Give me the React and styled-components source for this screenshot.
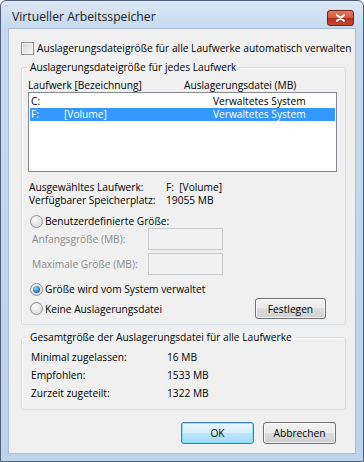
import React from "react";
import styled, { createGlobalStyle } from "styled-components";

const GlobalStyle = createGlobalStyle`
  html, body {
    margin: 0;
    padding: 0;
    background: #ffffff;
  }
  body {
    font-family: "Open Sans", "Noto Sans", sans-serif;
    font-size: 10.2px;
    color: #000;
  }
`;

const Window = styled.div`
  box-sizing: border-box;
  width: 364px;
  height: 462px;
  border: 1px solid #4f6078;
  border-radius: 6px 6px 0 0;
  background: linear-gradient(to bottom, #dce8f5 0, #c6d9ee 27px, #bdd3ec 100%);
  display: flex;
  flex-direction: column;
`;

const TitleBar = styled.div`
  height: 27px;
  display: flex;
  align-items: flex-start;
  justify-content: space-between;
  padding: 0 9px 0 11px;
`;

const Title = styled.div`
  font-size: 12.2px;
  line-height: 12px;
  margin-top: 10px;
  color: #1a1a1a;
`;

const CloseButton = styled.span`
  box-sizing: border-box;
  flex: none;
  width: 27px;
  height: 16px;
  margin-top: 9px;
  border: 1px solid #6e2218;
  border-radius: 3px;
  background-color: #c23f27;
  background-image: linear-gradient(180deg, #dc7a63 0%, #cf5a40 48%, #b2301c 52%, #c44c31 100%);
  display: flex;
  align-items: center;
  justify-content: center;
`;

const Client = styled.div`
  flex: 1;
  margin: 0 7px 7px;
  border: 1px solid #a8bbd2;
  background: #f0f0f0;
  padding: 12px 9px 0 12px;
  display: flex;
  flex-direction: column;
`;

const CheckRow = styled.label`
  display: flex;
  align-items: center;
  gap: 3px;
  height: 14px;
  white-space: nowrap;
`;

const CheckBox = styled.span`
  box-sizing: border-box;
  width: 13px;
  height: 13px;
  border: 1px solid #8e8f8f;
  box-shadow: inset 0 0 0 1px #f4f4f4;
  background: linear-gradient(135deg, #d6d6d6 0, #f7f7f7 100%);
  flex: none;
`;

const Group = styled.fieldset`
  margin: ${(p) => p.$top}px 0 0;
  padding: 0 8px ${(p) => p.$bottom}px 6px;
  border: 1px solid #d5dfe5;
  border-radius: 3px;
  box-shadow: inset 1px 1px 0 #ffffff;
  min-width: 0;
`;

const Legend = styled.legend`
  margin-left: -1px;
  padding: 0 3px;
  line-height: 14px;
  white-space: nowrap;
`;

const Columns = styled.div`
  display: grid;
  grid-template-columns: 156px 1fr;
  height: 14px;
  line-height: 14px;
  margin-top: 4px;
  white-space: nowrap;
`;

const ListBox = styled.div`
  box-sizing: border-box;
  height: 80px;
  border: 1px solid #828790;
  background: #ffffff;
  padding: 2px 1px;
`;

const ListRow = styled.div`
  display: grid;
  grid-template-columns: 33px 149px 1fr;
  padding-left: 1px;
  height: 13px;
  line-height: 13px;
  white-space: nowrap;
  background: ${(p) => (p.$selected ? "#3399ff" : "transparent")};
  color: ${(p) => (p.$selected ? "#ffffff" : "#000000")};
`;

const InfoGrid = styled.div`
  display: grid;
  grid-template-columns: ${(p) => p.$col}px 1fr;
  grid-auto-rows: ${(p) => p.$row}px;
  align-items: center;
  margin-top: ${(p) => p.$top}px;
  padding-left: ${(p) => p.$indent}px;
  white-space: nowrap;
`;

const RadioRow = styled.label`
  display: flex;
  align-items: center;
  gap: 2px;
  height: ${(p) => p.$height || 14}px;
  margin-top: ${(p) => p.$top}px;
  padding-left: 2px;
  white-space: nowrap;
`;

const RadioCircle = styled.span`
  box-sizing: border-box;
  width: 13px;
  height: 13px;
  border-radius: 50%;
  border: 1px solid #8e8f8f;
  background: radial-gradient(circle at 40% 35%, #fbfbfb 0, #e6e6e6 50%, #cfcfcf 100%);
  display: flex;
  align-items: center;
  justify-content: center;
  flex: none;
  &::after {
    content: "";
    display: ${(p) => (p.$checked ? "block" : "none")};
    width: 7px;
    height: 7px;
    border-radius: 50%;
    background: radial-gradient(circle at 40% 35%, #9fd8fb 0, #2d7fc4 55%, #174f8c 100%);
  }
`;

const FieldRow = styled.div`
  display: flex;
  align-items: center;
  height: ${(p) => p.$height}px;
  margin-top: ${(p) => p.$top}px;
  padding-left: 4px;
  color: #8a8a8a;
  white-space: nowrap;
`;

const FieldLabel = styled.span`
  width: 116px;
`;

const DisabledInput = styled.div`
  box-sizing: border-box;
  width: 75px;
  height: ${(p) => p.$height}px;
  border: 1px solid #c7c9cc;
  background: #f1f1f1;
`;

const Spacer = styled.span`
  flex: 1;
`;

const Button = styled.button`
  box-sizing: border-box;
  width: ${(p) => p.$width}px;
  height: ${(p) => p.$height}px;
  margin: 0 ${(p) => p.$right || 0}px 0 0;
  padding: 0;
  display: flex;
  align-items: center;
  justify-content: center;
  font-family: inherit;
  font-size: 10.2px;
  color: #000;
  border: 1px solid ${(p) => (p.$default ? "#3c7fb1" : "#707070")};
  border-radius: 3px;
  background: ${(p) =>
    p.$default
      ? "linear-gradient(to bottom, #eaf6fd 0, #d9f0fc 50%, #bee6fd 50%, #a7d9f5 100%)"
      : "linear-gradient(to bottom, #f2f2f2 0, #ebebeb 50%, #dddddd 50%, #cfcfcf 100%)"};
  box-shadow: inset 0 0 0 1px
    ${(p) => (p.$default ? "rgba(120, 220, 250, 0.8)" : "rgba(255, 255, 255, 0.7)")};
`;

const ButtonBar = styled.div`
  display: flex;
  justify-content: flex-end;
  gap: 9px;
  margin-top: 12px;
  padding-right: 10px;
`;

const drives = [
  { drive: "C:", label: "", file: "Verwaltetes System" },
  { drive: "F:", label: "[Volume]", file: "Verwaltetes System", selected: true },
];

const totals = [
  ["Minimal zugelassen:", "16 MB"],
  ["Empfohlen:", "1533 MB"],
  ["Zurzeit zugeteilt:", "1322 MB"],
];

export default function App() {
  return (
    <>
      <GlobalStyle />
      <Window>
        <TitleBar>
          <Title>Virtueller Arbeitsspeicher</Title>
          <CloseButton>
            <svg width="11" height="8" viewBox="0 0 11 8">
              <path d="M2 1.2 L9 6.8 M9 1.2 L2 6.8" stroke="#ffffff" strokeWidth="2" strokeLinecap="round" />
            </svg>
          </CloseButton>
        </TitleBar>
        <Client>
          <CheckRow>
            <CheckBox />
            Auslagerungsdateigröße für alle Laufwerke automatisch verwalten
          </CheckRow>

          <Group $top={5} $bottom={5}>
            <Legend>Auslagerungsdateigröße für jedes Laufwerk</Legend>
            <Columns>
              <span>Laufwerk [Bezeichnung]</span>
              <span>Auslagerungsdatei (MB)</span>
            </Columns>
            <ListBox>
              {drives.map((d) => (
                <ListRow key={d.drive} $selected={d.selected}>
                  <span>{d.drive}</span>
                  <span>{d.label}</span>
                  <span>{d.file}</span>
                </ListRow>
              ))}
            </ListBox>
            <InfoGrid $col={137} $row={13} $top={8} $indent={1}>
              <span>Ausgewähltes Laufwerk:</span>
              <span>F:&nbsp;&nbsp;[Volume]</span>
              <span>Verfügbarer Speicherplatz:</span>
              <span>19055 MB</span>
            </InfoGrid>
            <RadioRow $top={8}>
              <RadioCircle />
              Benutzerdefinierte Größe:
            </RadioRow>
            <FieldRow $height={22} $top={0}>
              <FieldLabel>Anfangsgröße (MB):</FieldLabel>
              <DisabledInput $height={22} />
            </FieldRow>
            <FieldRow $height={22} $top={3}>
              <FieldLabel>Maximale Größe (MB):</FieldLabel>
              <DisabledInput $height={22} />
            </FieldRow>
            <RadioRow $top={7}>
              <RadioCircle $checked />
              Größe wird vom System verwaltet
            </RadioRow>
            <RadioRow $top={2} $height={21}>
              <RadioCircle />
              Keine Auslagerungsdatei
              <Spacer />
              <Button as="span" $width={71} $height={21} $right={11}>
                Festlegen
              </Button>
            </RadioRow>
          </Group>

          <Group $top={5} $bottom={7}>
            <Legend>Gesamtgröße der Auslagerungsdatei für alle Laufwerke</Legend>
            <InfoGrid $col={136} $row={18} $top={4} $indent={3}>
              {totals.map(([k, v]) => (
                <React.Fragment key={k}>
                  <span>{k}</span>
                  <span>{v}</span>
                </React.Fragment>
              ))}
            </InfoGrid>
          </Group>

          <ButtonBar>
            <Button $default $width={73} $height={22}>OK</Button>
            <Button $width={73} $height={22}>Abbrechen</Button>
          </ButtonBar>
        </Client>
      </Window>
    </>
  );
}
